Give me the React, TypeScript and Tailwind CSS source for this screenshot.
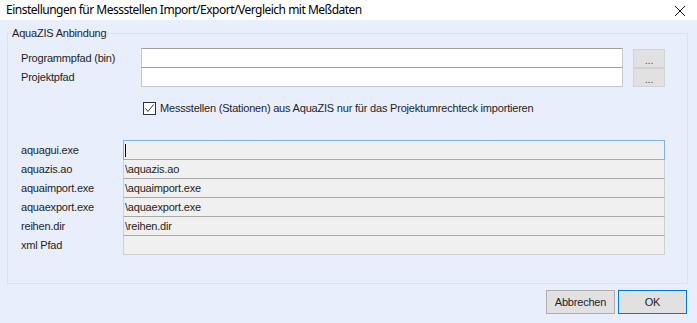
const lowerRows = [
  { label: "aquagui.exe", value: "", focus: true },
  { label: "aquazis.ao", value: "\\aquazis.ao" },
  { label: "aquaimport.exe", value: "\\aquaimport.exe" },
  { label: "aquaexport.exe", value: "\\aquaexport.exe" },
  { label: "reihen.dir", value: "\\reihen.dir" },
  { label: "xml Pfad", value: "" },
];

const upperRows = ["Programmpfad (bin)", "Projektpfad"];

const ui = { fontFamily: '"Liberation Sans", Arial, sans-serif' };

const App = () => {
  return (
    <div
      className="w-[697px] h-[323px] bg-[#e8eefb] flex flex-col text-[11px] tracking-[-0.2px] text-[#1e1e1e] overflow-hidden"
      style={ui}
    >
      {/* Title bar */}
      <div className="h-[20px] bg-white flex items-center justify-between shrink-0">
        <span
          className="pl-[6px] text-[12px] tracking-[-0.5px] leading-none text-black"
          style={{ fontFamily: '"Noto Sans", "Open Sans", sans-serif' }}
        >
          Einstellungen für Messstellen Import/Export/Vergleich mit Meßdaten
        </span>
        <svg width="12" height="12" viewBox="0 0 12 12" className="mr-[11px] mt-[2px]">
          <path d="M1 1 L11 11 M11 1 L1 11" stroke="#111" strokeWidth="1" />
        </svg>
      </div>

      {/* Group box */}
      <fieldset className="ml-[7px] mt-[7px] w-[681px] h-[257px] border border-[#dbe1ef] p-0 m-0">
        <legend className="ml-[3px] px-[1px] leading-[13px]">AquaZIS Anbindung</legend>

        <div className="mt-[8px] flex flex-col">
          {upperRows.map((label, i) => (
            <div key={label} className={`flex items-center h-[20px] ${i > 0 ? "-mt-px" : ""}`}>
              <span className="w-[133px] pl-[13px]">{label}</span>
              <div className="w-[482px] h-[20px] bg-white border border-[#c6c6c6] border-t-[#a0a0a0]" />
              <div className="ml-[10px] w-[32px] h-[19px] bg-[#e1e1e1] border border-[#d2d2d2] flex items-end justify-center text-[#555] leading-[14px]">
                ...
              </div>
            </div>
          ))}
        </div>

        <label className="flex items-center mt-[14px] ml-[135px] h-[14px]">
          <span className="w-[13px] h-[13px] border border-[#333] bg-white flex items-center justify-center">
            <svg width="11" height="11" viewBox="0 0 11 11">
              <path d="M1.5 5.5 L4 8.5 L9.5 1.5" fill="none" stroke="#333" strokeWidth="1" />
            </svg>
          </span>
          <span className="ml-[4px]">
            Messstellen (Stationen) aus AquaZIS nur für das Projektumrechteck importieren
          </span>
        </label>

        <div className="mt-[25px] flex flex-col">
          {lowerRows.map((row, i) => (
            <div key={row.label} className={`flex items-center h-[20px] ${i > 0 ? "-mt-px" : ""}`}>
              <span className="w-[115px] pl-[13px]">{row.label}</span>
              <div
                className={`w-[542px] h-[20px] bg-[#f0f0f0] border flex items-center leading-none ${
                  row.focus
                    ? "relative z-10 border-[#7eb4ea]"
                    : "border-[#cfcfcf] border-t-[#a8a8a8]"
                }`}
              >
                {row.focus ? (
                  <span className="ml-[1px] w-px h-[13px] bg-black" />
                ) : (
                  <span className="pl-px">{row.value}</span>
                )}
              </div>
            </div>
          ))}
        </div>
      </fieldset>

      {/* Buttons */}
      <div className="flex justify-end gap-[3px] mt-[6px] pr-[10px]">
        <button className="w-[69px] h-[24px] bg-[#e1e1e1] border border-[#adadad] text-[11px]">
          Abbrechen
        </button>
        <button className="w-[69px] h-[24px] bg-[#e1e1e1] border border-[#0078d7] text-[11px]">
          OK
        </button>
      </div>
    </div>
  );
};

export default App;
